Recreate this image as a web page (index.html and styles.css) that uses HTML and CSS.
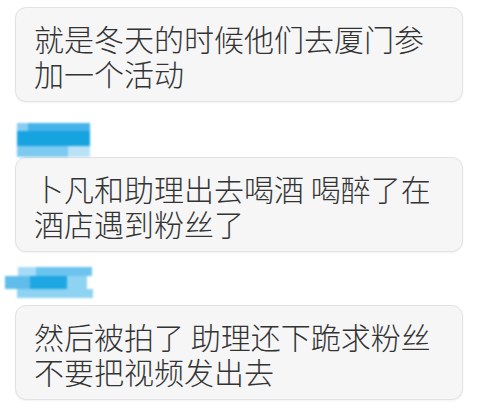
FILE: index.html
```html
<!DOCTYPE html>
<html lang="zh-CN">
<head>
	<meta charset="UTF-8">
	<title>聊天记录</title>
	<link rel="stylesheet" href="styles.css">
</head>
<body>
	<div class="chat">
		<div class="msg first">
			<div class="bubble">就是冬天的时候他们去厦门参加一个活动</div>
		</div>
		<div class="msg second">
			<div class="name">
				<span class="blk b1"></span>
				<span class="blk b2"></span>
				<span class="blk b3"></span>
			</div>
			<div class="bubble">卜凡和助理出去喝酒 喝醉了在酒店遇到粉丝了</div>
		</div>
		<div class="msg third">
			<div class="name">
				<span class="blk b1"></span>
				<span class="blk b2"></span>
				<span class="blk b3"></span>
			</div>
			<div class="bubble">然后被拍了 助理还下跪求粉丝不要把视频发出去</div>
		</div>
	</div>
</body>
</html>
```

FILE: styles.css
```css
body{
	margin: 0;
	padding: 0;
	background: #fff;
}
.chat{
	width: 484px;
	height: 411px;
	overflow: hidden;
	padding-top: 7px;
	box-sizing: border-box;
}
.msg{
	display: flex;
	flex-direction: column;
}
.bubble{
	margin-left: 15px;
	width: 448px;
	height: 95px;
	box-sizing: border-box;
	padding: 13px 30px 0 18px;
	background: #f6f6f7;
	border: 1px solid #e2e2e4;
	border-radius: 11px;
	font-family: "Noto Sans CJK SC", sans-serif;
	font-weight: 300;
	font-size: 30px;
	line-height: 35px;
	color: #333;
	box-shadow: 0 1px 2px rgba(0,0,0,0.05);
}
/* 名字打码 */
.name{
	display: flex;
	flex-direction: column;
	width: 90px;
	filter: blur(1px);
}
.blk{
	display: block;
}
.second{
	margin-top: 18px;
}
.second .name{
	margin-left: 17px;
	height: 37px;
	padding-top: 3px;
	box-sizing: border-box;
}
.second .b1{ background: linear-gradient(90deg,#86cdf1 0 15%,#45b3e9 15%); width: 73px; height: 8px;}
.second .b2{ background: #17a3e0; width: 73px; height: 15px;}
.second .b3{ background: linear-gradient(90deg,#7ccaf0 0 70%,#b9e2f6 70%); width: 73px; height: 11px;}
.third{
	margin-top: 13px;
}
.third .name{
	margin-left: 5px;
	height: 33px;
	margin-bottom: 7px;
	padding-top: 2px;
	box-sizing: border-box;
}
.third .b1{ background: linear-gradient(90deg,#a6dbf5 0 25%,#6cc3ee 25%); margin-left: 13px; width: 74px; height: 9px;}
.third .b2{ background: linear-gradient(90deg,#5fbceb 0 30%,#1ea7e2 30% 75%,#8fd3f3 75%); width: 82px; height: 13px;}
.third .b3{ background: #8fd3f3; margin-left: 12px; width: 76px; height: 9px;}
```
